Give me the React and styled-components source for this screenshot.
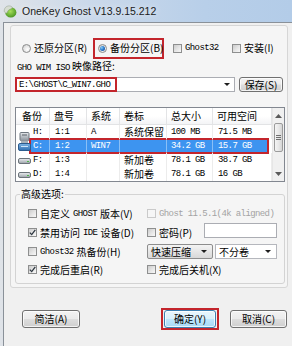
import React from 'react';
import styled, { createGlobalStyle, css } from 'styled-components';

const GlobalStyle = createGlobalStyle`
  html, body { margin: 0; padding: 0; }
  body {
    width: 292px;
    height: 346px;
    overflow: hidden;
    font-family: "Noto Sans CJK SC", "Liberation Sans", sans-serif;
    font-size: 10px;
    color: #000;
  }
  * { box-sizing: border-box; }
`;

const RED = '#c3252c';
const COLS = '34px 37px 33px 47px 46px 59px';

const Window = styled.div`
  width: 292px;
  height: 346px;
  display: flex;
  flex-direction: column;
  background: linear-gradient(90deg, #dfe3e8 0%, #cbd9ea 30%, #b8cfe9 70%, #b3cce8 100%);
`;

const TitleBar = styled.div`
  height: 22px;
  flex: none;
  display: flex;
  align-items: center;
  gap: 5px;
  padding: 0 0 1px 3px;
  font-family: "Liberation Sans", sans-serif;
  font-size: 10.5px;
  color: #1a1a1a;
  text-shadow: 0 0 6px rgba(255, 255, 255, 0.9);
`;

const Client = styled.div`
  flex: 1;
  margin-left: 3px;
  display: flex;
  flex-direction: column;
  background: #f0f0f0;
  border-left: 1px solid #8a9199;
  border-top: 1px solid #8a9199;
`;

const Panel = styled.div`
  width: 278px;
  margin: 2px 0 0 6px;
  padding: 11px 2px 3px 4px;
  background: #f5f5f5;
  border: 1px solid #d6d6d6;
  border-radius: 3px;
`;

const ChoiceRow = styled.div`
  height: 22px;
  display: flex;
  align-items: center;
  padding-left: 7px;
`;

const Choice = styled.span`
  display: inline-flex;
  align-items: center;
  gap: 3px;
  width: ${({ $w }) => ($w ? `${$w}px` : 'auto')};
  height: 12px;
  line-height: 12px;
  white-space: nowrap;
  color: ${({ $dim }) => ($dim ? '#a3a3a3' : '#000')};
`;

const Marked = styled.div`
  display: flex;
  align-items: center;
  flex: none;
  width: ${({ $w }) => $w}px;
  height: ${({ $h }) => $h}px;
  border: 2px solid ${RED};
`;

const RadioMark = styled(Marked)`
  margin-right: 9px;
  padding-left: 3px;
`;

const PathMark = styled(Marked)`
  margin: -1px;
  padding-left: 2px;
`;

const ButtonMark = styled(Marked)`
  justify-content: center;
  margin-left: 81px;
`;

const Radio = styled.span`
  flex: none;
  width: 9px;
  height: 9px;
  border-radius: 50%;
  border: 1px solid #8b8c8c;
  background: radial-gradient(circle at 65% 65%, #ffffff 0%, #e4e4e4 55%, #c9c9c9 100%);
  display: flex;
  align-items: center;
  justify-content: center;
  &::after {
    content: '';
    width: 5px;
    height: 5px;
    border-radius: 50%;
    background: ${({ $on }) =>
      $on ? 'radial-gradient(circle at 35% 35%, #8fd0f5 0%, #2f7fd0 45%, #123f84 100%)' : 'transparent'};
  }
`;

const Box = styled.span`
  flex: none;
  width: 9px;
  height: 9px;
  display: flex;
  align-items: center;
  justify-content: center;
  border: 1px solid ${({ $off }) => ($off ? '#cacaca' : '#8e8f8f')};
  background: ${({ $off }) =>
    $off ? '#f6f6f6' : 'linear-gradient(135deg, #cbcbcb 0%, #e6e6e6 55%, #f8f8f8 100%)'};
`;

const Mono = styled.span`
  font-family: "Liberation Mono", monospace;
  font-size: 9px;
  letter-spacing: -0.6px;
`;

const Caption = styled.div`
  height: 12px;
  line-height: 12px;
  margin: 1px 0 0 2px;
  white-space: nowrap;
`;

const PathRow = styled.div`
  height: 15px;
  margin-top: 5px;
  display: flex;
  gap: 4px;
`;

const Combo = styled.div`
  width: 220px;
  display: flex;
  align-items: center;
  background: #fff;
  border: 1px solid #abadb3;
`;

const Caret = styled.span`
  flex: none;
  margin-left: auto;
  margin-right: ${({ $r }) => $r ?? 4}px;
  border-left: 3px solid transparent;
  border-right: 3px solid transparent;
  border-top: 3px solid #1e1e1e;
`;

const Button = styled.button`
  flex: none;
  width: ${({ $w }) => $w}px;
  height: ${({ $h }) => $h ?? 18}px;
  padding: 0;
  font-family: inherit;
  font-size: 10px;
  line-height: 1;
  color: #000;
  border: 1px solid #707070;
  border-radius: 3px;
  background: linear-gradient(#f3f3f3 0%, #ebebeb 48%, #dddddd 52%, #cfcfcf 100%);
  box-shadow: inset 0 0 0 1px rgba(255, 255, 255, 0.75);
  ${({ $primary }) =>
    $primary &&
    css`
      border-color: #3c7fb1;
      background: linear-gradient(#eaf6fd 0%, #d9f0fc 48%, #bee6fd 52%, #a7d9f5 100%);
    `}
`;

const List = styled.div`
  width: 270px;
  height: 75px;
  margin-top: 15px;
  display: flex;
  background: #fff;
  border: 1px solid #828790;
`;

const Rows = styled.div`
  width: 256px;
  display: flex;
  flex-direction: column;
`;

const HeadRow = styled.div`
  display: grid;
  grid-template-columns: ${COLS};
  height: 17px;
  background: linear-gradient(#ffffff 0%, #ffffff 50%, #f3f4f6 100%);
  border-bottom: 1px solid #e2e3e5;
`;

const HeadCell = styled.div`
  padding-left: ${({ $pad }) => $pad ?? 4}px;
  line-height: 16px;
  white-space: nowrap;
  border-right: 1px solid #e3e4e6;
`;

const Row = styled.div`
  position: relative;
  display: grid;
  grid-template-columns: ${COLS};
  height: 14px;
  color: ${({ $sel }) => ($sel ? '#fff' : '#000')};
  ${({ $sel }) =>
    $sel &&
    css`
      &::before {
        content: '';
        position: absolute;
        left: 13px;
        right: 3px;
        top: -1px;
        bottom: -1px;
        background: #3d94f0;
        border: 2px solid ${RED};
      }
    `}
`;

const Cell = styled.div`
  position: relative;
  z-index: 1;
  display: flex;
  align-items: center;
  gap: 3px;
  padding-left: ${({ $pad }) => $pad ?? 4}px;
  white-space: nowrap;
  line-height: 12px;
  border-right: 1px solid ${({ $sel }) => ($sel ? 'rgba(255,255,255,0.4)' : '#ececec')};
`;

const IconSlot = styled.span`
  position: relative;
  flex: none;
  width: 12px;
  height: 14px;
`;

const ScrollBar = styled.div`
  width: 12px;
  display: flex;
  flex-direction: column;
  background: #f0f0f0;
  border-left: 1px solid #e6e6e6;
`;

const ScrollBtn = styled.div`
  height: 15px;
  display: flex;
  align-items: center;
  justify-content: center;
`;

const Thumb = styled.div`
  height: 29px;
  margin: 0 1px;
  display: flex;
  flex-direction: column;
  align-items: center;
  justify-content: center;
  gap: 1px;
  border: 1px solid #9b9b9b;
  border-radius: 2px;
  background: linear-gradient(90deg, #f4f4f4 0%, #e8e8e8 50%, #d6d6d6 100%);
`;

const Grip = styled.span`
  width: 5px;
  height: 1px;
  background: #6f6f6f;
`;

const Track = styled.div`
  flex: 1;
`;

const Group = styled.fieldset`
  margin: 6px 0 0;
  padding: 4px 0 5px 4px;
  min-inline-size: 0;
  border: 1px solid #d3d3d3;
  border-radius: 3px;
`;

const Legend = styled.legend`
  padding: 0 1px;
  height: 12px;
  line-height: 12px;
`;

const Options = styled.div`
  margin-left: 8px;
  display: grid;
  grid-template-columns: 119px 1fr;
  grid-template-rows: 19px 19px 19px 17px;
  align-items: center;
`;

const Pair = styled.div`
  display: flex;
  align-items: center;
  gap: ${({ $gap }) => $gap ?? 0}px;
`;

const Field = styled.div`
  width: ${({ $w }) => $w}px;
  height: 15px;
  margin-top: -5px;
  background: #fff;
  border: 1px solid #abadb3;
`;

const Select = styled.div`
  width: ${({ $w }) => $w}px;
  height: 15px;
  display: flex;
  align-items: center;
  padding-left: 3px;
  line-height: 12px;
  white-space: nowrap;
  border: 1px solid ${({ $flat }) => ($flat ? '#b5b7bd' : '#8d8d8d')};
  border-radius: ${({ $flat }) => ($flat ? 0 : 2)}px;
  background: ${({ $flat }) => ($flat ? '#fff' : 'linear-gradient(#f4f4f4 0%, #e6e6e6 50%, #d8d8d8 100%)')};
`;

const ButtonRow = styled.div`
  height: 22px;
  margin-top: 20px;
  padding-left: 18px;
  display: flex;
  align-items: center;
`;

const CancelButton = styled(Button)`
  margin-left: 11px;
`;

const Check = () => (
  <svg width="7" height="7" viewBox="0 0 7 7">
    <path d="M0.8 3.6 L2.7 5.6 L6.3 0.9" fill="none" stroke="#2d3640" strokeWidth="1.3" />
  </svg>
);

const CheckBox = ({ on, off }) => <Box $off={off}>{on && <Check />}</Box>;

const AppIcon = () => (
  <svg width="14" height="14" viewBox="0 0 14 14">
    <defs>
      <radialGradient id="g" cx="0.45" cy="0.4" r="0.7">
        <stop offset="0" stopColor="#a6e05a" />
        <stop offset="1" stopColor="#3d8a1c" />
      </radialGradient>
    </defs>
    <ellipse cx="7.8" cy="8.4" rx="5.6" ry="5.2" fill="url(#g)" />
    <path d="M1.2 7.2 C1 3.4 4.4 1 7.8 2.2 C9.4 2.8 9.6 4 8.4 4.6 C6.2 5.4 4.6 6.6 4 8.8 C3 9.4 1.6 8.8 1.2 7.2 Z" fill="#d7ddd2" stroke="#8e9a88" strokeWidth="0.5" />
  </svg>
);

const DiskIcon = () => (
  <svg width="13" height="8" viewBox="0 0 13 8" style={{ position: 'absolute', left: 0, top: 4 }}>
    <defs>
      <linearGradient id="d" x1="0" y1="0" x2="0" y2="1">
        <stop offset="0" stopColor="#eef0f2" />
        <stop offset="1" stopColor="#9aa1a8" />
      </linearGradient>
    </defs>
    <rect x="0.5" y="1.5" width="12" height="5" rx="1.5" fill="url(#d)" stroke="#6c737a" />
    <rect x="9" y="4" width="2" height="1" fill="#4fb64a" />
  </svg>
);

const SystemIcon = () => (
  <svg width="13" height="20" viewBox="0 0 13 20" style={{ position: 'absolute', left: 0, top: -7 }}>
    <defs>
      <linearGradient id="s" x1="0" y1="0" x2="0" y2="1">
        <stop offset="0" stopColor="#e6e9ec" />
        <stop offset="1" stopColor="#8d959d" />
      </linearGradient>
      <linearGradient id="b" x1="0" y1="0" x2="0" y2="1">
        <stop offset="0" stopColor="#7fb6e6" />
        <stop offset="1" stopColor="#2f6db0" />
      </linearGradient>
    </defs>
    <rect x="2" y="0.5" width="9" height="8" rx="1" fill="url(#s)" stroke="#6f777f" />
    <rect x="4" y="2.5" width="5" height="1" fill="#5a6168" />
    <rect x="3" y="8.5" width="7" height="3" fill="#a9b1b8" />
    <rect x="0.5" y="11.5" width="12" height="7" rx="1.5" fill="url(#b)" stroke="#2c5b8d" />
    <rect x="3" y="14" width="7" height="1" fill="#cfe6fa" />
  </svg>
);

const Arrow = ({ up }) => (
  <svg width="7" height="4" viewBox="0 0 7 4">
    <path d={up ? 'M0 4 L3.5 0 L7 4 Z' : 'M0 0 L3.5 4 L7 0 Z'} fill="#5a5a5a" />
  </svg>
);

const drives = [
  { id: 'H:', disk: '1:1', sys: 'A', label: '系统保留', total: '100 MB', free: '71.5 MB' },
  { id: 'C:', disk: '1:2', sys: 'WIN7', label: '', total: '34.2 GB', free: '15.7 GB', sel: true, icon: 'sys' },
  { id: 'F:', disk: '1:3', sys: '', label: '新加卷', total: '78.1 GB', free: '38.7 GB', icon: 'disk' },
  { id: 'D:', disk: '1:4', sys: '', label: '新加卷', total: '78.1 GB', free: '16 GB', icon: 'disk' },
];

const headers = ['盘号', '系统', '卷标', '总大小', '可用空间'];

const DriveList = () => (
  <List>
    <Rows>
      <HeadRow>
        <HeadCell $pad={6}>备份</HeadCell>
        {headers.map((h) => (
          <HeadCell key={h}>{h}</HeadCell>
        ))}
      </HeadRow>
      {drives.map((d) => (
        <Row key={d.id} $sel={d.sel}>
          <Cell $pad={2} $sel={d.sel}>
            <IconSlot>
              {d.icon === 'sys' && <SystemIcon />}
              {d.icon === 'disk' && <DiskIcon />}
            </IconSlot>
            <Mono>{d.id}</Mono>
          </Cell>
          <Cell $pad={5} $sel={d.sel}><Mono>{d.disk}</Mono></Cell>
          <Cell $sel={d.sel}><Mono>{d.sys}</Mono></Cell>
          <Cell $sel={d.sel}>{d.label}</Cell>
          <Cell $sel={d.sel}><Mono>{d.total}</Mono></Cell>
          <Cell $pad={5} $sel={d.sel}><Mono>{d.free}</Mono></Cell>
        </Row>
      ))}
    </Rows>
    <ScrollBar>
      <ScrollBtn><Arrow up /></ScrollBtn>
      <Thumb>
        <Grip />
        <Grip />
        <Grip />
      </Thumb>
      <Track />
      <ScrollBtn><Arrow /></ScrollBtn>
    </ScrollBar>
  </List>
);

const App = () => (
  <>
    <GlobalStyle />
    <Window>
      <TitleBar>
        <AppIcon />
        OneKey Ghost V13.9.15.212
      </TitleBar>
      <Client>
        <Panel>
          <ChoiceRow>
            <Choice $w={71}>
              <Radio />
              还原分区(R)
            </Choice>
            <RadioMark $w={71} $h={21}>
              <Choice>
                <Radio $on />
                备份分区(B)
              </Choice>
            </RadioMark>
            <Choice $w={59}>
              <CheckBox />
              <Mono>Ghost32</Mono>
            </Choice>
            <Choice>
              <CheckBox />
              安装(I)
            </Choice>
          </ChoiceRow>

          <Caption>
            <Mono>GHO WIM ISO</Mono> 映像路径:
          </Caption>

          <PathRow>
            <Combo>
              <PathMark $w={102} $h={15}>
                <Mono>E:\GHOST\C_WIN7.GHO</Mono>
              </PathMark>
              <Caret />
            </Combo>
            <Button $w={44} $h={15}>保存(S)</Button>
          </PathRow>

          <DriveList />

          <Group>
            <Legend>高级选项:</Legend>
            <Options>
              <Choice>
                <CheckBox />
                自定义 <Mono>GHOST</Mono> 版本(V)
              </Choice>
              <Choice $dim>
                <CheckBox off />
                <Mono>Ghost 11.5.1(4k aligned)</Mono>
              </Choice>

              <Choice>
                <CheckBox on />
                禁用访问 <Mono>IDE</Mono> 设备(D)
              </Choice>
              <Pair>
                <Choice $w={57}>
                  <CheckBox />
                  密码(P)
                </Choice>
                <Field $w={73} />
              </Pair>

              <Choice>
                <CheckBox />
                <Mono>Ghost32</Mono> 热备份(H)
              </Choice>
              <Pair $gap={2}>
                <Select $w={66}>
                  快速压缩
                  <Caret $r={5} />
                </Select>
                <Select $w={62} $flat>
                  不分卷
                  <Caret $r={5} />
                </Select>
              </Pair>

              <Choice>
                <CheckBox on />
                完成后重启(R)
              </Choice>
              <Choice>
                <CheckBox />
                完成后关机(X)
              </Choice>
            </Options>
          </Group>
        </Panel>

        <ButtonRow>
          <Button $w={58}>简洁(A)</Button>
          <ButtonMark $w={58} $h={22}>
            <Button $w={52} $primary>确定(Y)</Button>
          </ButtonMark>
          <CancelButton $w={57}>取消(C)</CancelButton>
        </ButtonRow>
      </Client>
    </Window>
  </>
);

export default App;
